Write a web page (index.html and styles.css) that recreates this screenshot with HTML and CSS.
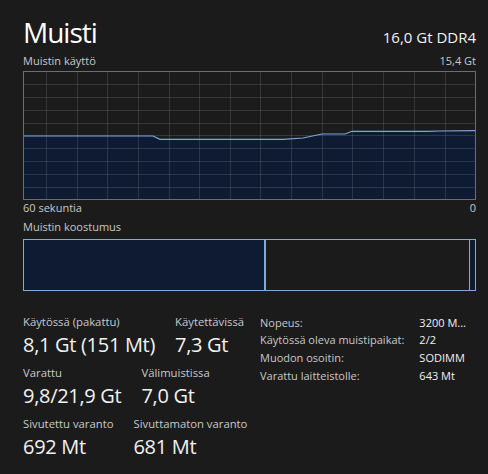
FILE: index.html
```html
<!DOCTYPE html>
<html lang="fi">
<head>
<meta charset="utf-8">
<title>Muisti</title>
<link rel="stylesheet" href="styles.css">
</head>
<body>
<div class="panel">
  <div class="header">
    <h1 class="title">Muisti</h1>
    <div class="total">16,0 Gt DDR4</div>
  </div>
  <div class="caption-row">
    <span>Muistin käyttö</span>
    <span>15,4 Gt</span>
  </div>
  <svg class="graph" width="453" height="129" viewBox="0 0 453 129">
    <rect x="0" y="0" width="453" height="129" fill="#1b1b1b"/>
    <path d="M0.5 65 L130 65 L137 68.3 L260 68.3 L280 67 L299 63 L322 63 L329 60.3 L404 60.3 L417 60 L452.5 59.7 L452.5 128.5 L0.5 128.5 Z" fill="#0f1b33"/>
    <g stroke="rgba(255,255,255,0.12)" stroke-width="1">
      <line x1="23.5" y1="0" x2="23.5" y2="129"/>
      <line x1="54.5" y1="0" x2="54.5" y2="129"/>
      <line x1="84.5" y1="0" x2="84.5" y2="129"/>
      <line x1="115.5" y1="0" x2="115.5" y2="129"/>
      <line x1="146.5" y1="0" x2="146.5" y2="129"/>
      <line x1="176.5" y1="0" x2="176.5" y2="129"/>
      <line x1="207.5" y1="0" x2="207.5" y2="129"/>
      <line x1="237.5" y1="0" x2="237.5" y2="129"/>
      <line x1="268.5" y1="0" x2="268.5" y2="129"/>
      <line x1="299.5" y1="0" x2="299.5" y2="129"/>
      <line x1="329.5" y1="0" x2="329.5" y2="129"/>
      <line x1="360.5" y1="0" x2="360.5" y2="129"/>
      <line x1="391.5" y1="0" x2="391.5" y2="129"/>
      <line x1="422.5" y1="0" x2="422.5" y2="129"/>
      <line x1="0" y1="13.5" x2="453" y2="13.5"/>
      <line x1="0" y1="26.5" x2="453" y2="26.5"/>
      <line x1="0" y1="39.5" x2="453" y2="39.5"/>
      <line x1="0" y1="52.5" x2="453" y2="52.5"/>
      <line x1="0" y1="64.5" x2="453" y2="64.5"/>
      <line x1="0" y1="77.5" x2="453" y2="77.5"/>
      <line x1="0" y1="90.5" x2="453" y2="90.5"/>
      <line x1="0" y1="103.5" x2="453" y2="103.5"/>
      <line x1="0" y1="116.5" x2="453" y2="116.5"/>
    </g>
    <path d="M0.5 65 L130 65 L137 68.3 L260 68.3 L280 67 L299 63 L322 63 L329 60.3 L404 60.3 L417 60 L452.5 59.7" fill="none" stroke="#7ea6dc" stroke-width="1.2"/>
    <rect x="0.5" y="0.5" width="452" height="128" fill="none" stroke="#6e6e6e" stroke-width="1"/>
  </svg>
  <div class="caption-row">
    <span>60 sekuntia</span>
    <span>0</span>
  </div>
  <div class="caption">Muistin koostumus</div>
  <div class="comp">
    <div class="seg seg-use"></div>
    <div class="seg seg-mod"></div>
    <div class="seg seg-standby"></div>
    <div class="seg seg-free"></div>
  </div>
  <div class="stats">
    <div class="stats-left">
      <div class="stat-row">
        <div class="stat"><div class="stat-label">Käytössä (pakattu)</div><div class="stat-value">8,1 Gt (151 Mt)</div></div>
        <div class="stat"><div class="stat-label">Käytettävissä</div><div class="stat-value">7,3 Gt</div></div>
      </div>
      <div class="stat-row">
        <div class="stat"><div class="stat-label">Varattu</div><div class="stat-value">9,8/21,9 Gt</div></div>
        <div class="stat"><div class="stat-label">Välimuistissa</div><div class="stat-value">7,0 Gt</div></div>
      </div>
      <div class="stat-row">
        <div class="stat"><div class="stat-label">Sivutettu varanto</div><div class="stat-value">692 Mt</div></div>
        <div class="stat"><div class="stat-label">Sivuttamaton varanto</div><div class="stat-value">681 Mt</div></div>
      </div>
    </div>
    <div class="stats-right">
      <span class="k">Nopeus:</span><span class="v">3200 M...</span>
      <span class="k">Käytössä oleva muistipaikat:</span><span class="v">2/2</span>
      <span class="k">Muodon osoitin:</span><span class="v">SODIMM</span>
      <span class="k">Varattu laitteistolle:</span><span class="v">643 Mt</span>
    </div>
  </div>
</div>
</body>
</html>
```

FILE: styles.css
```css
* { box-sizing: border-box; }
html, body {
  margin: 0;
  padding: 0;
  background: #1b1b1b;
}
body {
  font-family: "Open Sans", "Noto Sans", sans-serif;
  color: #c9c9c9;
  width: 488px;
  height: 474px;
  overflow: hidden;
}
.panel {
  padding: 15px 12px 0 23px;
}
.header {
  display: flex;
  justify-content: space-between;
  align-items: baseline;
  height: 34px;
}
.title {
  margin: 0;
  font-size: 28px;
  font-weight: 400;
  line-height: 34px;
  letter-spacing: -1px;
  color: #ffffff;
}
.total {
  font-size: 15px;
  color: #f2f2f2;
}
.caption-row {
  display: flex;
  justify-content: space-between;
  font-size: 11px;
  line-height: 16px;
  margin-top: 4px;
}
.caption-row + .graph { margin-top: 2px; }
.graph {
  display: block;
  margin-top: 2px;
}
.graph + .caption-row { margin-top: 0; }
.caption {
  font-size: 11px;
  line-height: 16px;
  margin-top: 3px;
}
.comp {
  display: flex;
  height: 52px;
  margin-top: 4px;
  border: 1px solid #85a8d8;
}
.seg { height: 100%; }
.seg-use {
  width: 240px;
  background: #0f1b33;
}
.seg-mod {
  width: 2px;
  background: #85a8d8;
}
.seg-standby {
  flex: 1;
}
.seg-free {
  width: 6px;
  background: #0f1b33;
  border-left: 1px solid #85a8d8;
}
.stats {
  display: flex;
  margin-top: 23px;
}
.stats-left {
  flex: 0 0 237px;
  display: flex;
  flex-direction: column;
  gap: 5px;
}
.stat-row {
  display: flex;
  gap: 20px;
}
.stat-label {
  font-size: 11.3px;
  line-height: 16px;
  white-space: nowrap;
}
.stat-value {
  font-size: 20px;
  line-height: 30px;
  letter-spacing: -0.3px;
  color: #f2f2f2;
  white-space: nowrap;
}
.stats-right {
  display: grid;
  grid-template-columns: auto auto;
  column-gap: 15px;
  grid-auto-rows: 17.75px;
  font-size: 11px;
  line-height: 17.75px;
  margin-top: -0.5px;
}
.stats-right .k {
  white-space: nowrap;
}
.stats-right .v {
  color: #f2f2f2;
  white-space: nowrap;
}
```
